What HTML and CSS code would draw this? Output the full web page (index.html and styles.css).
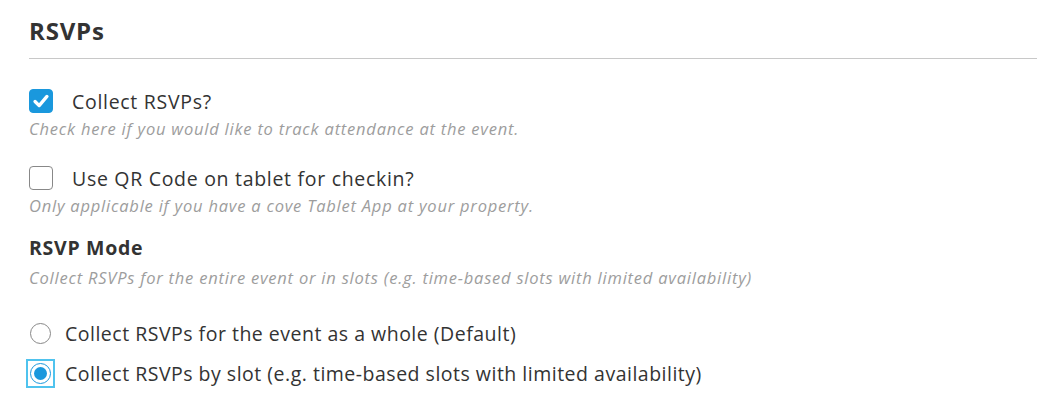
FILE: index.html
```html
<!DOCTYPE html>
<html lang="en">
<head>
    <meta charset="UTF-8">
    <meta name="viewport" content="width=device-width, initial-scale=1.0">
    <title>RSVPs</title>
    <link rel="stylesheet" href="styles.css">
</head>
<body>
    <div class="section">
        <h2 class="section-title">RSVPs</h2>

        <!-- Collect RSVPs -->
        <div class="field">
            <label class="check-row">
                <span class="checkbox checked">
                    <svg viewBox="0 0 24 24" width="24" height="24"><path d="M5.5 12.5l4.5 4.5 8.5-10" fill="none" stroke="#fff" stroke-width="3.6" stroke-linecap="round" stroke-linejoin="round"/></svg>
                </span>
                <span class="check-label">Collect RSVPs?</span>
            </label>
            <p class="help">Check here if you would like to track attendance at the event.</p>
        </div>

        <!-- QR code -->
        <div class="field">
            <label class="check-row">
                <span class="checkbox"></span>
                <span class="check-label">Use QR Code on tablet for checkin?</span>
            </label>
            <p class="help">Only applicable if you have a cove Tablet App at your property.</p>
        </div>

        <div class="field mode">
            <h3 class="field-title">RSVP Mode</h3>
            <p class="help">Collect RSVPs for the entire event or in slots (e.g. time-based slots with limited availability)</p>
        </div>

        <div class="radios">
            <label class="radio-row">
                <span class="radio-wrap"><span class="radio"></span></span>
                <span class="radio-label">Collect RSVPs for the event as a whole (Default)</span>
            </label>
            <label class="radio-row">
                <span class="radio-wrap focused"><span class="radio selected"></span></span>
                <span class="radio-label">Collect RSVPs by slot (e.g. time-based slots with limited availability)</span>
            </label>
        </div>
    </div>
</body>
</html>
```

FILE: styles.css
```css
body {
    margin: 0;
    font-family: "Open Sans", Lato, sans-serif;
    background-color: #fff;
    color: #333;
}
.section {
    padding: 17px 12px 0 29px;
}
.section-title {
    margin: 0;
    font-size: 24px;
    font-weight: bold;
    letter-spacing: 0.8px;
    line-height: 28px;
    color: #333;
    padding-bottom: 13px;
    border-bottom: 1px solid #c8c8c8;
}
.field {
    margin-top: 30px;
}
.field + .field {
    margin-top: 27px;
}
.check-row {
    display: flex;
    align-items: center;
    height: 24px;
}
.checkbox {
    width: 22px;
    height: 22px;
    border: 1px solid #888;
    border-radius: 4px;
    box-sizing: content-box;
    display: flex;
    align-items: center;
    justify-content: center;
}
.checkbox.checked {
    background-color: #1a98dd;
    border-color: #1a98dd;
}
.checkbox svg {
    width: 22px;
    height: 22px;
}
.check-label {
    margin-left: 19px;
    font-size: 19.5px;
    letter-spacing: 0.7px;
}
.help {
    margin: 6px 0 0;
    font-size: 16.5px;
    font-style: italic;
    letter-spacing: 0.78px;
    color: #9d9d9d;
    line-height: 20px;
}
.field.mode {
    margin-top: 20px;
}
.field-title {
    margin: 0;
    font-size: 19.5px;
    font-weight: bold;
    letter-spacing: 0.7px;
    line-height: 24px;
}
.field.mode .help {
    margin-top: 8px;
}
.radios {
    margin-top: 30px;
    display: flex;
    flex-direction: column;
    gap: 10px;
}
.radio-row {
    display: flex;
    align-items: center;
    height: 30px;
}
.radio-wrap {
    margin-left: -3px;
    width: 29px;
    height: 29px;
    box-sizing: border-box;
    display: flex;
    align-items: center;
    justify-content: center;
}
.radio-wrap.focused {
    border: 2px solid #4fc3ee;
}
.radio {
    width: 21px;
    height: 21px;
    border: 1.5px solid #888;
    border-radius: 50%;
    box-sizing: border-box;
    display: flex;
    align-items: center;
    justify-content: center;
}
.radio.selected {
    border-color: #1a98dd;
}
.radio.selected::after {
    content: "";
    width: 13px;
    height: 13px;
    border-radius: 50%;
    background-color: #1a98dd;
}
.radio-label {
    margin-left: 10px;
    font-size: 19.5px;
    letter-spacing: 0.5px;
}
```
